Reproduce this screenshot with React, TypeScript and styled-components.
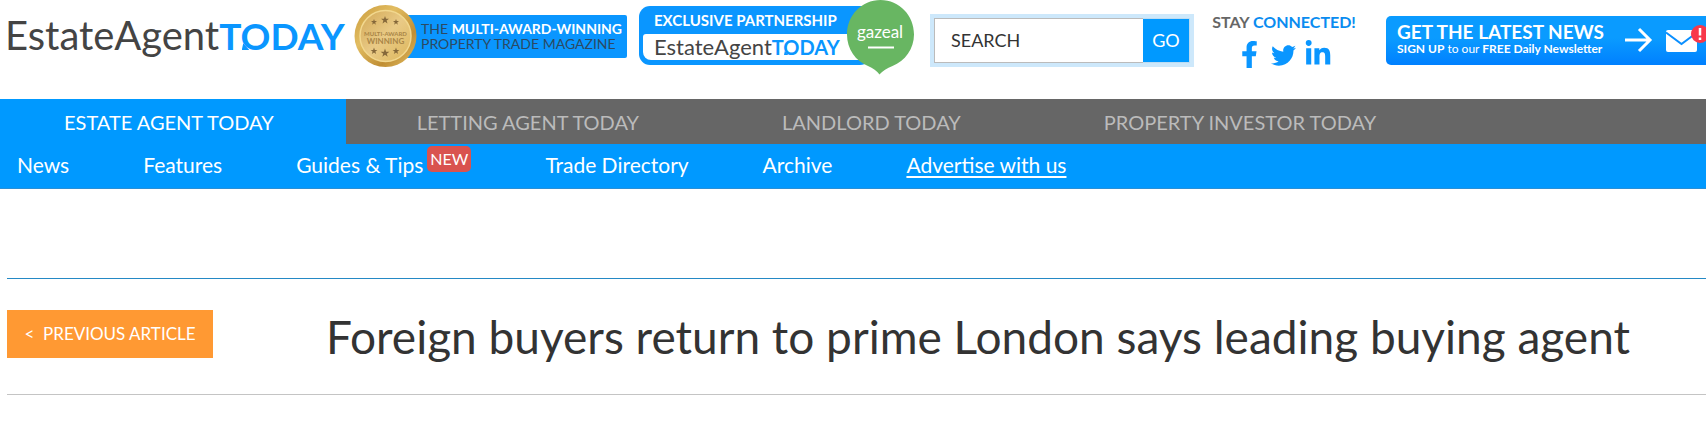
import React from "react";
import styled, { createGlobalStyle } from "styled-components";
import { FaFacebookF, FaTwitter, FaLinkedinIn } from "react-icons/fa";

const GlobalStyle = createGlobalStyle`
  *, *::before, *::after { box-sizing: border-box; }
  body {
    margin: 0;
    background: #fff;
    color: #333;
    font-family: Lato, "Liberation Sans", sans-serif;
    overflow-x: hidden;
  }
  a { color: inherit; text-decoration: none; }
  button, input { font: inherit; }
`;

const Header = styled.header`
  display: flex;
  align-items: center;
  height: 80px;
  margin-bottom: 19px;
  padding-left: 5px;
  overflow: hidden;
  white-space: nowrap;
`;

const Wordmark = styled.span<{ $size: number }>`
  display: block;
  font-size: ${(p) => p.$size}px;
  line-height: 1;
  color: #444;
`;

const Today = styled.span<{ $size: number }>`
  font-size: ${(p) => p.$size}px;
  font-weight: 700;
  color: #0a96ff;
`;

const Bubble = styled.span`
  position: relative;
  &::after {
    content: "";
    position: absolute;
    left: 4%;
    bottom: 17%;
    width: 26%;
    height: 16%;
    background: currentColor;
    clip-path: polygon(20% 0, 100% 100%, 0 100%);
  }
`;

const LogoLink = styled.a`
  flex: none;
  width: 349px;
  padding-bottom: 10px;
`;

const Award = styled.div`
  flex: none;
  display: flex;
  align-items: center;
  width: 273px;
  padding-bottom: 8px;
  svg { flex: none; position: relative; z-index: 1; }
`;

const AwardBar = styled.div`
  flex: 1;
  height: 43px;
  margin-left: -12px;
  padding: 6px 0 0 16px;
  border-radius: 2px;
  background: #0a96ff;
  color: #2c4a63;
  font-size: 14px;
  line-height: 15px;
  strong { color: #fff; }
`;

const Partner = styled.a`
  flex: none;
  align-self: flex-start;
  position: relative;
  width: 276px;
  margin-left: 12px;
  padding-top: 6px;
`;

const PartnerBox = styled.div`
  width: 232px;
  height: 59px;
  padding: 4px 0 5px 4px;
  border-radius: 11px;
  background: #0a96ff;
`;

const PartnerTitle = styled.div`
  height: 24px;
  padding-left: 11px;
  color: #fff;
  font-size: 15px;
  font-weight: 700;
  line-height: 20px;
`;

const PartnerBrand = styled.div`
  height: 26px;
  padding: 2px 0 0 11px;
  border-radius: 3px 0 0 8px;
  background: #fff;
`;

const Pin = styled.svg`
  position: absolute;
  top: 0;
  right: 0;
`;

const SearchForm = styled.form`
  flex: none;
  display: flex;
  width: 264px;
  height: 53px;
  margin-left: 15px;
  border: 4px solid #cde8fb;
`;

const SearchInput = styled.input`
  flex: 1;
  min-width: 0;
  padding: 0 16px;
  border: 1px solid #bbb;
  border-right: 0;
  border-radius: 0;
  outline: 0;
  font-size: 18px;
  color: #333;
  &::placeholder { color: #333; opacity: 1; }
`;

const GoButton = styled.button`
  width: 47px;
  padding: 0;
  border: 1px solid #bcdcf2;
  border-left: 0;
  background: #09f;
  color: #fff;
  font-size: 18px;
`;

const Social = styled.div`
  flex: none;
  width: 148px;
  margin-left: 16px;
  font-size: 16px;
  font-weight: 700;
  line-height: 24px;
  color: #666;
  text-align: center;
  em { font-style: normal; color: #0a8cf0; }
`;

const SocialIcons = styled.div`
  display: flex;
  justify-content: center;
  align-items: flex-end;
  gap: 8px;
  height: 36px;
  padding-bottom: 2px;
  color: #0a96ff;
  a { display: flex; }
`;

const Newsletter = styled.a`
  flex: none;
  display: flex;
  align-items: center;
  width: 340px;
  height: 49px;
  margin-left: 28px;
  padding-left: 11px;
  border-radius: 5px;
  background: linear-gradient(#0a9bff, #0a9bff 45%, #0080ff);
  color: #fff;
  svg { flex: none; }
`;

const NewsText = styled.div`
  width: 226px;
  padding-bottom: 2px;
  font-size: 12px;
  line-height: 14px;
`;

const NewsTitle = styled.strong`
  display: block;
  font-size: 19px;
  line-height: 20px;
`;

const TabBar = styled.nav`
  display: flex;
  height: 45px;
  background: #666;
  white-space: nowrap;
`;

const Tab = styled.a<{ $active?: boolean }>`
  flex: none;
  padding: 0 72px 0 ${(p) => (p.$active ? 64 : 71)}px;
  background: ${(p) => (p.$active ? "#09f" : "transparent")};
  color: ${(p) => (p.$active ? "#fff" : "#bbb")};
  font-size: 20px;
  line-height: 46px;
`;

const SubNav = styled.nav`
  display: flex;
  gap: 74px;
  height: 45px;
  padding-left: 17px;
  border-bottom: 1px solid #2a8fd6;
  background: #09f;
  color: #fff;
  font-size: 21px;
  line-height: 41px;
  white-space: nowrap;
`;

const SubLink = styled.a<{ $underlined?: boolean }>`
  display: flex;
  text-decoration: ${(p) => (p.$underlined ? "underline" : "none")};
  text-decoration-thickness: 2px;
  text-underline-offset: 3px;
`;

const NewBadge = styled.span`
  height: 26px;
  margin: 2px 0 0 4px;
  padding: 0 3px;
  border-radius: 5px;
  background: #d9534f;
  font-size: 16px;
  line-height: 26px;
`;

const Article = styled.main`
  display: flex;
  align-items: flex-start;
  height: 117px;
  margin: 89px 0 0 7px;
  padding-top: 31px;
  border-top: 1px solid #2489c5;
  border-bottom: 1px solid #c4c4c4;
`;

const Previous = styled.button`
  flex: none;
  width: 206px;
  height: 48px;
  padding: 0 0 2px;
  border: 0;
  background: #f93;
  color: #fff;
  font-size: 17px;
  white-space: pre;
`;

const Title = styled.h1`
  flex: 1;
  margin: 0;
  padding-right: 76px;
  font-size: 46px;
  font-weight: 400;
  line-height: 54px;
  text-align: right;
  white-space: nowrap;
`;

const Brand = ({ size, todaySize }: { size: number; todaySize: number }) => (
  <Wordmark $size={size}>
    EstateAgent
    <Today $size={todaySize}>
      T<Bubble>O</Bubble>DAY
    </Today>
  </Wordmark>
);

const STAR = "M0-4 1-1.2 4-1.2 1.6.6 2.5 3.5 0 1.7-2.5 3.5-1.6.6-4-1.2-1-1.2Z";

const Medal = () => (
  <svg width="63" height="64" viewBox="0 0 63 64" aria-hidden="true">
    <defs>
      <linearGradient id="gold" x1="0" y1="0" x2="1" y2="1">
        <stop offset="0" stopColor="#c99a3b" />
        <stop offset=".35" stopColor="#e2bd62" />
        <stop offset=".7" stopColor="#c08e34" />
        <stop offset="1" stopColor="#e6c266" />
      </linearGradient>
      <linearGradient id="face" x1="0" y1="0" x2="1" y2="1">
        <stop offset="0" stopColor="#d2a855" />
        <stop offset=".5" stopColor="#e9ca86" />
        <stop offset="1" stopColor="#ddb65a" />
      </linearGradient>
    </defs>
    <circle cx="31.5" cy="32" r="31" fill="url(#gold)" />
    <circle cx="31.5" cy="32" r="25.5" fill="url(#face)" stroke="#f2d88f" strokeWidth="1.5" />
    <g fill="#85683a">
      <path d={STAR} transform="translate(20 18) scale(.75)" />
      <path d={STAR} transform="translate(31 16)" />
      <path d={STAR} transform="translate(42 18) scale(.75)" />
      <path d={STAR} transform="translate(20 47) scale(.85)" />
      <path d={STAR} transform="translate(31 49) scale(1.1)" />
      <path d={STAR} transform="translate(42 47) scale(.85)" />
    </g>
    <g fill="#a98546" textAnchor="middle" fontWeight="700">
      <text x="31.5" y="32" fontSize="6">MULTI-AWARD</text>
      <text x="31.5" y="40" fontSize="8">WINNING</text>
    </g>
  </svg>
);

const GazealPin = () => (
  <Pin width="69" height="75" viewBox="0 0 69 75" aria-hidden="true">
    <path
      fill="#68b662"
      d="M34.500 0C53.500 0 68 15.500 68 34.500C68 49 59 61 46.500 66C41 68.200 36.500 71 33.500 74.500C31 71 27 68.200 22 66C9.500 61 1 49 1 34.500C1 15.500 15.500 0 34.500 0Z"
    />
    <text x="34" y="38" fill="#fff" fontSize="17" textAnchor="middle">
      gazeal
    </text>
    <path d="M22 47.500H48" stroke="#fff" strokeWidth="2" />
  </Pin>
);

const Envelope = () => (
  <svg width="46" height="30" viewBox="0 0 46 30" aria-hidden="true">
    <rect x="1" y="5" width="31" height="22" rx="2" fill="#fff" />
    <path d="M1 7.500 16.500 19 32 7.500" fill="none" stroke="#0a8fff" strokeWidth="2" />
    <circle cx="35" cy="9" r="9" fill="#f8384a" />
    <path d="M35 3V10.500M35 12.500V15" stroke="#fff" strokeWidth="2.500" />
  </svg>
);

export default function App() {
  return (
    <>
      <GlobalStyle />
      <Header>
        <LogoLink href="#">
          <Brand size={40} todaySize={37} />
        </LogoLink>
        <Award>
          <Medal />
          <AwardBar>
            THE <strong>MULTI-AWARD-WINNING</strong>
            <br />
            PROPERTY TRADE MAGAZINE
          </AwardBar>
        </Award>
        <Partner href="#">
          <PartnerBox>
            <PartnerTitle>EXCLUSIVE PARTNERSHIP</PartnerTitle>
            <PartnerBrand>
              <Brand size={22} todaySize={20} />
            </PartnerBrand>
          </PartnerBox>
          <GazealPin />
        </Partner>
        <SearchForm onSubmit={(e) => e.preventDefault()}>
          <SearchInput type="text" placeholder="SEARCH" aria-label="Search" />
          <GoButton type="submit">GO</GoButton>
        </SearchForm>
        <Social>
          STAY <em>CONNECTED!</em>
          <SocialIcons>
            <a href="#" aria-label="Facebook"><FaFacebookF size={27} /></a>
            <a href="#" aria-label="Twitter"><FaTwitter size={25} /></a>
            <a href="#" aria-label="LinkedIn"><FaLinkedinIn size={28} /></a>
          </SocialIcons>
        </Social>
        <Newsletter href="#">
          <NewsText>
            <NewsTitle>GET THE LATEST NEWS</NewsTitle>
            <strong>SIGN UP</strong> to our <strong>FREE Daily Newsletter</strong>
          </NewsText>
          <svg width="42" height="26" viewBox="0 0 42 26" aria-hidden="true">
            <path d="M2 13H27M16 2 27 13 16 24" fill="none" stroke="#fff" strokeWidth="3" />
          </svg>
          <Envelope />
        </Newsletter>
      </Header>
      <TabBar>
        <Tab href="#" $active>ESTATE AGENT TODAY</Tab>
        <Tab href="#">LETTING AGENT TODAY</Tab>
        <Tab href="#">LANDLORD TODAY</Tab>
        <Tab href="#">PROPERTY INVESTOR TODAY</Tab>
      </TabBar>
      <SubNav>
        <SubLink href="#">News</SubLink>
        <SubLink href="#">Features</SubLink>
        <SubLink href="#">
          Guides &amp; Tips<NewBadge>NEW</NewBadge>
        </SubLink>
        <SubLink href="#">Trade Directory</SubLink>
        <SubLink href="#">Archive</SubLink>
        <SubLink href="#" $underlined>Advertise with us</SubLink>
      </SubNav>
      <Article>
        <Previous type="button">{"<  PREVIOUS ARTICLE"}</Previous>
        <Title>Foreign buyers return to prime London says leading buying agent</Title>
      </Article>
    </>
  );
}
